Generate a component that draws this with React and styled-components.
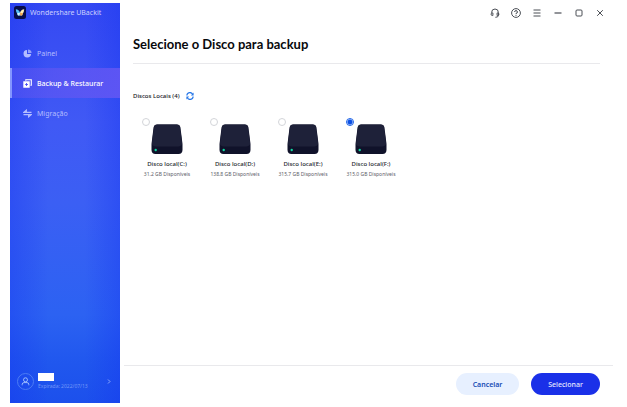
import React, { useState } from 'react'
import styled, { createGlobalStyle, css } from 'styled-components'

const GlobalStyle = createGlobalStyle`
  * {
    box-sizing: border-box;
  }

  body {
    margin: 0;
    background: #fff;
    color: #14161c;
    font-family: 'Noto Sans', 'Open Sans', sans-serif;
  }

  button {
    border: 0;
    padding: 0;
    background: none;
    color: inherit;
    font: inherit;
    cursor: pointer;
  }

  svg {
    display: block;
  }
`

const Window = styled.div`
  display: flex;
  min-height: 100vh;
  padding: 3px 14px 4px 10px;
`

const Sidebar = styled.aside`
  display: flex;
  flex-direction: column;
  flex: 0 0 110px;
  background:
    linear-gradient(to right, rgba(20, 50, 240, 0.35), transparent 35%, transparent 68%, rgba(20, 50, 240, 0.35)),
    linear-gradient(#3549f2, #4059f5 30%, #3b5ff4 50%, #2c62f2 78%, #2057ee 90%, #1c50ec);
`

const Brand = styled.div`
  display: flex;
  align-items: center;
  gap: 4px;
  height: 18px;
  padding-left: 4px;
  color: #ccd2ff;
  font-size: 7px;
  white-space: nowrap;
`

const Nav = styled.nav`
  display: flex;
  flex-direction: column;
  margin-top: 17px;
`

const NavLink = styled.a`
  display: flex;
  align-items: center;
  gap: 5px;
  height: 30px;
  padding-left: 11px;
  border-left: 2px solid transparent;
  color: #b3bdff;
  font-size: 7px;
  text-decoration: none;
  white-space: nowrap;

  ${props => props.$active && css`
    border-left-color: #8496ff;
    background: linear-gradient(to right, rgba(100, 86, 240, 0.4), rgba(104, 88, 244, 0.8));
    color: #fff;
    font-weight: 500;
  `}
`

const Account = styled.button`
  display: flex;
  align-items: center;
  gap: 4px;
  margin-top: auto;
  height: 44px;
  padding: 0 9px 0 7px;
  color: #a9c0ff;
  text-align: left;
`

const Avatar = styled.span`
  display: grid;
  place-items: center;
  width: 17px;
  height: 17px;
  border: 1px solid #4c7cf5;
  border-radius: 50%;
`

const AccountInfo = styled.span`
  display: flex;
  flex: 1;
  flex-direction: column;
  gap: 1px;
  color: #7397f8;
  font-size: 5px;
  line-height: 8px;
  white-space: nowrap;
`

const HiddenName = styled.span`
  width: 16px;
  height: 8px;
  background: #fff;
`

const Main = styled.main`
  display: flex;
  flex: 1;
  flex-direction: column;
  min-width: 0;
`

const TitleBar = styled.header`
  display: flex;
  justify-content: flex-end;
  height: 20px;
  padding-right: 3px;
  color: #4a4e55;
`

const TitleButton = styled.button`
  display: grid;
  place-items: center;
  width: 21px;
  height: 20px;
`

const Content = styled.div`
  flex: 1;
  padding: 0 13px;
`

const Title = styled.h1`
  margin: 0;
  padding: 10px 0 8px;
  border-bottom: 1px solid #e9e9ec;
  color: #08090c;
  font-family: Lato, 'Noto Sans', sans-serif;
  font-size: 13px;
  font-weight: 700;
  line-height: 22px;
`

const Disks = styled.fieldset`
  min-width: 0;
  margin: 0;
  padding: 0;
  border: 0;
`

const SectionHead = styled.div`
  display: flex;
  align-items: center;
  gap: 6px;
  margin-top: 26px;
  height: 12px;
  font-size: 6px;
  font-weight: 500;
`

const DiskList = styled.div`
  display: flex;
  margin-top: 16px;
`

const Disk = styled.label`
  display: grid;
  grid-template-columns: 18px 32px 18px;
  grid-template-rows: 41px 10px;
  width: 68px;
  cursor: pointer;
`

const Radio = styled.input`
  appearance: none;
  justify-self: end;
  width: 8px;
  height: 8px;
  margin: 0 1px 0 0;
  border: 1px solid #d3d5d9;
  border-radius: 50%;
  background: #fff;

  &:checked {
    border-color: #1c62e8;
    background: radial-gradient(circle, #0c50e4 2px, #e3edff 3px);
  }
`

const Drive = styled.svg`
  margin-top: 6px;
`

const DiskText = styled.span`
  grid-column: 1 / -1;
  color: #25272d;
  font-size: 6px;
  font-weight: 500;
  line-height: 10px;
  text-align: center;
  white-space: nowrap;
`

const DiskSpace = styled(DiskText)`
  color: #5d6068;
  font-size: 5px;
  font-weight: 400;
`

const Footer = styled.footer`
  display: flex;
  justify-content: flex-end;
  gap: 12px;
  margin-left: 4px;
  padding: 7px 13px 8px;
  border-top: 1px solid #e9e9ec;
`

const Action = styled.button`
  && {
    width: ${props => (props.$primary ? 69 : 63)}px;
    height: 22px;
    border-radius: 11px;
    background: ${props => (props.$primary ? '#1a30e8' : '#e7f0ff')};
    color: ${props => (props.$primary ? '#e6e9ff' : '#174db5')};
    font-size: 7px;
    font-weight: ${props => (props.$primary ? 500 : 600)};
  }
`

const Logo = () => (
  <svg width="12" height="13" viewBox="0 0 12 13" aria-hidden="true">
    <rect width="12" height="13" rx="2.5" fill="#080d4c" />
    <path d="M1.8 3.2Q5 3.4 6 6.8L5.5 9.8Q3.3 9.8 3.1 7.2Q1.9 5.8 1.8 3.2Z" fill="#55bdf8" />
    <path d="M10.2 3.2Q7 3.4 6 6.8L6.5 9.8Q8.7 9.8 8.9 7.2Q10.1 5.8 10.2 3.2Z" fill="#fff0b5" />
    <path d="M6 6.8 8.9 7.2Q8.7 9.8 6.5 9.8Z" fill="#f5a54a" />
    <path d="M6 6.8 3.1 7.2Q3.3 9.8 5.5 9.8Z" fill="#d5f5ff" />
  </svg>
)

const PanelIcon = () => (
  <svg width="9" height="9" viewBox="0 0 9 9" aria-hidden="true">
    <path d="M4 .9A3.8 3.8 0 1 0 8.1 5H4Z" fill="currentColor" />
    <path d="M5 .4A3.7 3.7 0 0 1 8.6 4H5Z" fill="currentColor" opacity=".75" />
  </svg>
)

const BackupIcon = () => (
  <svg width="9" height="9" viewBox="0 0 9 9" aria-hidden="true">
    <path d="M2.8 1.7V.7H8.3V6.2H7.4" fill="none" stroke="currentColor" strokeWidth="1.1" />
    <path fillRule="evenodd" d="M.3 2.2H6.7V8.7H.3ZM3.1 4.1V5H2.2V6H3.1V6.9H4V6H4.9V5H4V4.1Z" fill="currentColor" />
  </svg>
)

const MigrationIcon = () => (
  <svg width="9" height="9" viewBox="0 0 9 9" aria-hidden="true">
    <path d="M8.5 3.4H.8L3.4 1.1V3.4M.5 5.6H8.2L5.6 7.9V5.6" fill="none" stroke="currentColor" strokeWidth="1.1" />
  </svg>
)

const UserIcon = () => (
  <svg width="9" height="9" viewBox="0 0 9 9" fill="none" stroke="#a9c6ff" strokeWidth=".9" aria-hidden="true">
    <circle cx="4.5" cy="2.8" r="2" />
    <path d="M1.2 8.3V7.3Q1.2 5.6 3 5.6H6Q7.8 5.6 7.8 7.3V8.3" />
  </svg>
)

const ChevronIcon = () => (
  <svg width="4" height="5" viewBox="0 0 4 5" aria-hidden="true">
    <path d="M1 .5 3 2.5 1 4.5" fill="none" stroke="currentColor" strokeWidth=".8" />
  </svg>
)

const RefreshIcon = () => (
  <svg width="8" height="8" viewBox="0 0 8 8" aria-hidden="true">
    <path d="M.9 3.6A3 3 0 0 1 6.7 2.5M7.1 4.4A3 3 0 0 1 1.3 5.5" fill="none" stroke="#2878e8" strokeWidth="1.2" />
    <path d="M7.6.6V3.4H4.9ZM.4 7.4V4.6H3.1Z" fill="#2878e8" />
  </svg>
)

const titleIcons = [
  {
    name: 'Suporte',
    shape: (
      <>
        <path d="M1.6 5V4.6A3.4 3.6 0 0 1 8.4 4.6V7.4Q8.4 9.3 5.4 9.3" />
        <path d="M2.9 4.9V7.5H2.2Q1.1 7.5 1.1 6.2T2.2 4.9ZM7.1 4.9V7.5H7.8Q8.9 7.5 8.9 6.2T7.8 4.9Z" />
      </>
    )
  },
  {
    name: 'Ajuda',
    shape: (
      <>
        <circle cx="5" cy="5" r="4.4" />
        <path d="M3.6 4A1.4 1.4 0 1 1 5 5.4V6.2M5 7V7.9" />
      </>
    )
  },
  { name: 'Menu', shape: <path d="M1.5 2H8.5M1.5 5H8.5M1.5 8H8.5" /> },
  { name: 'Minimizar', shape: <path d="M1.5 5H8.5" strokeWidth="1.2" /> },
  { name: 'Maximizar', shape: <rect x="2" y="2" width="6" height="6" rx="1" /> },
  { name: 'Fechar', shape: <path d="M2.2 2.2 7.8 7.8M7.8 2.2 2.2 7.8" /> }
]

const DriveIcon = () => (
  <Drive width="32" height="31" viewBox="0 0 32 31" aria-hidden="true">
    <path d="M6.2 .6H25.8Q29 .6 29.4 3.6L31.5 20V26Q31.3 30 27.6 30H4.4Q.7 30 .5 26V20L2.6 3.6Q3 .6 6.2 .6Z" fill="#10122a" />
    <path d="M6.4 .6H25.6Q28.7 .6 29.1 3.6L31 18.6Q31.4 22.4 27.6 22.4H4.4Q.6 22.4 1 18.6L2.9 3.6Q3.3 .6 6.4 .6Z" fill="#1e2139" />
    <circle cx="4.7" cy="26" r="1.2" fill="#10d6a0" />
  </Drive>
)

const disks = [
  { letter: 'C', free: '31.2' },
  { letter: 'D', free: '138.8' },
  { letter: 'E', free: '315.7' },
  { letter: 'F', free: '315.0' }
]

const App = () => {
  const [selected, setSelected] = useState('F')

  return (
    <>
      <GlobalStyle />
      <Window>
        <Sidebar>
          <Brand>
            <Logo />
            Wondershare UBackit
          </Brand>
          <Nav>
            <NavLink href="#painel"><PanelIcon />Painel</NavLink>
            <NavLink href="#backup" $active aria-current="page"><BackupIcon />Backup &amp; Restaurar</NavLink>
            <NavLink href="#migracao"><MigrationIcon />Migração</NavLink>
          </Nav>
          <Account aria-label="Conta">
            <Avatar><UserIcon /></Avatar>
            <AccountInfo>
              <HiddenName />
              Expirada: 2022/07/13
            </AccountInfo>
            <ChevronIcon />
          </Account>
        </Sidebar>

        <Main>
          <TitleBar>
            {titleIcons.map(({ name, shape }) => (
              <TitleButton key={name} aria-label={name}>
                <svg width="10" height="10" viewBox="0 0 10 10" fill="none" stroke="currentColor">{shape}</svg>
              </TitleButton>
            ))}
          </TitleBar>

          <Content>
            <Title>Selecione o Disco para backup</Title>
            <SectionHead>
              <span id="disks-label">Discos Locais (4)</span>
              <button aria-label="Atualizar"><RefreshIcon /></button>
            </SectionHead>
            <Disks aria-labelledby="disks-label">
              <DiskList>
                {disks.map(({ letter, free }) => (
                  <Disk key={letter}>
                    <Radio
                      type="radio"
                      name="disk"
                      value={letter}
                      checked={selected === letter}
                      onChange={() => setSelected(letter)}
                    />
                    <DriveIcon />
                    <DiskText>Disco local({letter}:)</DiskText>
                    <DiskSpace>{free} GB Disponíveis</DiskSpace>
                  </Disk>
                ))}
              </DiskList>
            </Disks>
          </Content>

          <Footer>
            <Action>Cancelar</Action>
            <Action $primary>Selecionar</Action>
          </Footer>
        </Main>
      </Window>
    </>
  )
}

export default App
